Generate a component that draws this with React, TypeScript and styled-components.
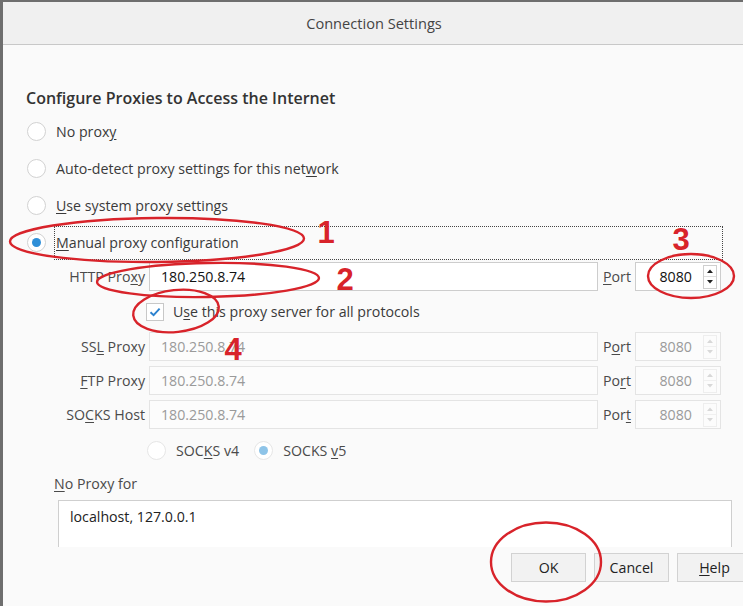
import React from "react";
import styled, { createGlobalStyle } from "styled-components";

const GlobalStyle = createGlobalStyle`
  html, body {
    margin: 0;
    padding: 0;
    background: #fafafa;
  }
  body {
    font-family: "Open Sans", "Noto Sans", sans-serif;
    font-size: 14.2px;
    color: #3a3a3a;
  }
  * {
    box-sizing: border-box;
  }
`;

export default function App() {
  return (
    <>
      <GlobalStyle />
      <Window>
        <TitleBar>Connection Settings</TitleBar>
        <Body>
          <Heading>Configure Proxies to Access the Internet</Heading>
          <RadioRow>
            <Radio />
            <RadioLabel>
              No prox<u>y</u>
            </RadioLabel>
          </RadioRow>
          <RadioRow>
            <Radio />
            <RadioLabel>
              Auto-detect proxy settings for this net<u>w</u>ork
            </RadioLabel>
          </RadioRow>
          <RadioRow>
            <Radio />
            <RadioLabel>
              <u>U</u>se system proxy settings
            </RadioLabel>
          </RadioRow>
          <RadioRow>
            <Radio $checked />
            <RadioLabel $focused>
              <u>M</u>anual proxy configuration
            </RadioLabel>
          </RadioRow>

          <ProxyGrid>
            <FieldLabel>
              HTTP Pro<u>x</u>y
            </FieldLabel>
            <TextField readOnly value="180.250.8.74" />
            <PortLabel>
              <u>P</u>ort
            </PortLabel>
            <PortField value="8080" />

            <OptionRow>
              <CheckBox>
                <svg width="12" height="10" viewBox="0 0 12 10">
                  <path
                    d="M1.5 5.2 L4.6 8.2 L10.6 1.6"
                    fill="none"
                    stroke="#2b82cf"
                    strokeWidth="1.9"
                  />
                </svg>
              </CheckBox>
              <span>
                U<u>s</u>e this proxy server for all protocols
              </span>
            </OptionRow>

            <FieldLabel>
              SS<u>L</u> Proxy
            </FieldLabel>
            <TextField readOnly value="180.250.8.74" disabled />
            <PortLabel>
              P<u>o</u>rt
            </PortLabel>
            <PortField value="8080" disabled />

            <FieldLabel>
              <u>F</u>TP Proxy
            </FieldLabel>
            <TextField readOnly value="180.250.8.74" disabled />
            <PortLabel>
              Po<u>r</u>t
            </PortLabel>
            <PortField value="8080" disabled />

            <FieldLabel>
              SO<u>C</u>KS Host
            </FieldLabel>
            <TextField readOnly value="180.250.8.74" disabled />
            <PortLabel>
              Por<u>t</u>
            </PortLabel>
            <PortField value="8080" disabled />

            <OptionRow>
              <Radio $disabled />
              <SocksLabel>
                SOC<u>K</u>S v4
              </SocksLabel>
              <Radio $checked $disabled $gap={15} />
              <SocksLabel>
                SOCKS <u>v</u>5
              </SocksLabel>
            </OptionRow>
          </ProxyGrid>

          <NoProxyLabel>
            <u>N</u>o Proxy for
          </NoProxyLabel>
          <NoProxyArea>localhost, 127.0.0.1</NoProxyArea>
        </Body>

        <ButtonBar>
          <Button>OK</Button>
          <Button>Cancel</Button>
          <Button>
            <u>H</u>elp
          </Button>
        </ButtonBar>

        <Annotations />
      </Window>
    </>
  );
}

const PortField = ({ value, disabled }: { value: string; disabled?: boolean }) => (
  <PortBox $disabled={disabled}>
    <PortValue>{value}</PortValue>
    <Spinner $disabled={disabled}>
      <SpinHalf>
        <svg width="6" height="4" viewBox="0 0 6 4">
          <path d="M0 4 L3 0.5 L6 4 Z" fill="currentColor" />
        </svg>
      </SpinHalf>
      <SpinHalf>
        <svg width="6" height="4" viewBox="0 0 6 4">
          <path d="M0 0 L3 3.5 L6 0 Z" fill="currentColor" />
        </svg>
      </SpinHalf>
    </Spinner>
  </PortBox>
);

const Annotations = () => (
  <Overlay width="743" height="606" viewBox="0 0 743 606">
    <g fill="none" stroke="#d8232a" strokeWidth="2.4">
      <ellipse cx="157" cy="240" rx="147" ry="22" transform="rotate(-0.6 157 240)" />
      <ellipse cx="208" cy="280" rx="111" ry="17" transform="rotate(-1 208 280)" />
      <ellipse cx="691" cy="276" rx="43" ry="22" />
      <ellipse cx="176" cy="311" rx="43" ry="21" transform="rotate(-6 176 311)" />
      <ellipse cx="546" cy="562" rx="55" ry="39.5" />
    </g>
    <g fill="#d8232a" fontFamily='"Liberation Sans", Arial, sans-serif' fontWeight="700" fontSize="31" textAnchor="middle">
      <text x="326" y="243">1</text>
      <text x="345" y="290">2</text>
      <text x="681" y="250">3</text>
      <text x="233" y="360">4</text>
    </g>
  </Overlay>
);

const Window = styled.div`
  position: relative;
  width: 743px;
  height: 606px;
  overflow: hidden;
  background: #fafafa;
  border-top: 2px solid #6e6e6e;
  border-left: 3px solid #6e6e6e;
  display: flex;
  flex-direction: column;
`;

const TitleBar = styled.div`
  height: 43px;
  flex-shrink: 0;
  background: #f0f0f0;
  border-bottom: 1px solid #c8c8c8;
  display: flex;
  align-items: center;
  justify-content: center;
  font-size: 14.6px;
  color: #444;
  padding-left: 2px;
`;

const Body = styled.div`
  flex: 1;
  padding: 42px 0 0 23px;
`;

const Heading = styled.h2`
  margin: 0 0 4px;
  font-size: 16px;
  font-weight: 600;
  line-height: 22px;
  color: #333;
`;

const RadioRow = styled.div`
  display: flex;
  align-items: center;
  height: 37px;
`;

const Radio = styled.span<{ $checked?: boolean; $disabled?: boolean; $gap?: number }>`
  flex-shrink: 0;
  width: 19px;
  height: 19px;
  margin-left: ${(p) => (p.$gap ? `${p.$gap}px` : "1px")};
  border-radius: 50%;
  border: 1px solid ${(p) => (p.$disabled ? "#e6e6e6" : "#d2d2d2")};
  background: #fff;
  display: grid;
  place-items: center;

  &::after {
    content: "";
    display: ${(p) => (p.$checked ? "block" : "none")};
    width: 9px;
    height: 9px;
    border-radius: 50%;
    background: ${(p) => (p.$disabled ? "#8ec4e8" : "#2f8fd8")};
  }
`;

const RadioLabel = styled.label<{ $focused?: boolean }>`
  margin-left: 9px;
  padding-left: 1px;
  height: 32px;
  display: flex;
  align-items: center;
  color: #3a3a3a;
  ${(p) =>
    p.$focused &&
    `
    flex: 1;
    margin-right: 21px;
    outline: 1px dotted #444;
  `}

  u {
    text-underline-offset: 2px;
  }
`;

const ProxyGrid = styled.div`
  display: grid;
  grid-template-columns: 119px 449px auto 86px;
  grid-template-rows: 29px 31px 29px 29px 29px 32px;
  justify-content: start;
  column-gap: 4px;
  row-gap: 5px;
  margin-top: 1px;
  align-items: center;

  u {
    text-underline-offset: 2px;
  }
`;

const FieldLabel = styled.label`
  justify-self: end;
  color: #4a4a4a;
  white-space: nowrap;
`;

const TextField = styled.input`
  height: 29px;
  width: 100%;
  border: 1px solid ${(p) => (p.disabled ? "#e4e4e4" : "#cdcdcd")};
  background: ${(p) => (p.disabled ? "#fcfcfc" : "#fff")};
  color: ${(p) => (p.disabled ? "#9a9a9a" : "#111")};
  font: inherit;
  padding: 0 0 0 11px;
  outline: none;
`;

const PortLabel = styled.label`
  padding-left: 1px;
  color: #4a4a4a;
`;

const PortBox = styled.div<{ $disabled?: boolean }>`
  height: 29px;
  border: 1px solid ${(p) => (p.$disabled ? "#e4e4e4" : "#cdcdcd")};
  background: ${(p) => (p.$disabled ? "#fcfcfc" : "#fff")};
  color: ${(p) => (p.$disabled ? "#9a9a9a" : "#111")};
  display: flex;
  align-items: center;
  justify-content: flex-end;
  padding-right: 3px;
`;

const PortValue = styled.span`
  margin-right: 11px;
`;

const Spinner = styled.div<{ $disabled?: boolean }>`
  width: 14px;
  height: 24px;
  border: 1px solid ${(p) => (p.$disabled ? "#eeeeee" : "#cfcfcf")};
  display: flex;
  flex-direction: column;
  color: ${(p) => (p.$disabled ? "#d8d8d8" : "#222")};

  & > div + div {
    border-top: 1px solid ${(p) => (p.$disabled ? "#f0f0f0" : "#dedede")};
  }
`;

const SpinHalf = styled.div`
  flex: 1;
  display: grid;
  place-items: center;
`;

const OptionRow = styled.div`
  grid-column: 2 / span 3;
  display: flex;
  align-items: center;
  margin-left: -3px;
  color: #3a3a3a;
`;

const CheckBox = styled.span`
  width: 18px;
  height: 18px;
  margin-right: 9px;
  border: 1px solid #c8c8c8;
  background: #fff;
  display: grid;
  place-items: center;
`;

const SocksLabel = styled.span`
  margin-left: 10px;
  color: #4a4a4a;
`;

const NoProxyLabel = styled.div`
  margin: 8px 0 0 28px;
  line-height: 20px;
  color: #4a4a4a;

  u {
    text-underline-offset: 2px;
  }
`;

const NoProxyArea = styled.div`
  margin: 6px 0 0 32px;
  width: 674px;
  height: 47px;
  border: 1px solid #cfcfcf;
  border-bottom: none;
  background: #fff;
  padding: 6px 11px 0;
  line-height: 20px;
  color: #222;
`;

const ButtonBar = styled.div`
  height: 58px;
  flex-shrink: 0;
  display: flex;
  justify-content: flex-end;
  gap: 8px;
  padding-top: 5px;
  margin-right: -9px;
`;

const Button = styled.button`
  width: 75px;
  height: 29px;
  border: 1px solid #d2d2d2;
  background: #f2f2f2;
  font: inherit;
  color: #222;
  padding: 0;

  u {
    text-underline-offset: 2px;
  }
`;

const Overlay = styled.svg`
  position: absolute;
  top: -2px;
  left: -3px;
  pointer-events: none;
`;
